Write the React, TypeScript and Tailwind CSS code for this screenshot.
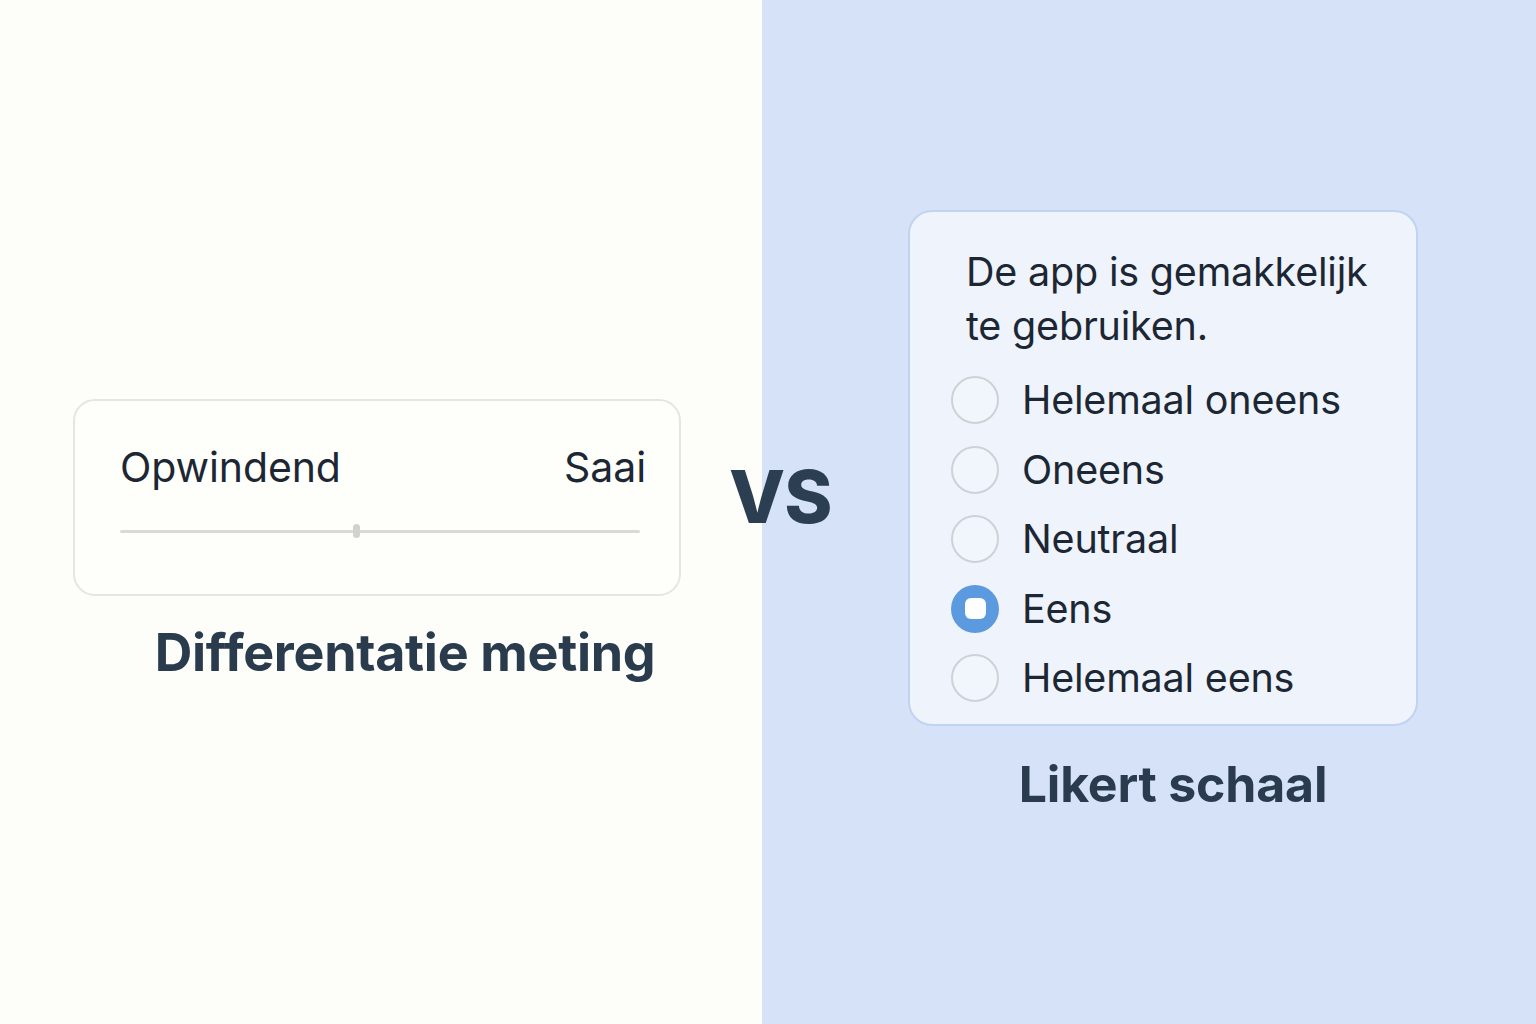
import React from "react";

const options = [
  { label: "Helemaal oneens", checked: false },
  { label: "Oneens", checked: false },
  { label: "Neutraal", checked: false },
  { label: "Eens", checked: true },
  { label: "Helemaal eens", checked: false },
];

export default function App() {
  return (
    <div
      className="relative flex w-[1536px] h-[1024px] overflow-hidden"
      style={{ fontFamily: "Inter, 'Noto Sans', sans-serif" }}
    >
      {/* Left half */}
      <div className="w-[762px] h-full bg-[#fdfdf9] flex flex-col pt-[399px] pl-[73px]">
        <div className="w-[608px] h-[197px] rounded-[22px] border-2 border-[#e6e5e1] bg-[#fefefb] px-[45px] pt-[41px]">
          <div className="flex justify-between items-baseline text-[41px] leading-[50px] text-[#1c2733] tracking-[-0.1px]">
            <span>Opwindend</span>
            <span className="mr-[-12px]">Saai</span>
          </div>
          <div className="relative mt-[38px] w-[520px] h-[3px] bg-[#dcdad6] rounded-full">
            <div className="absolute left-[233px] top-[-6px] w-[7px] h-[14px] rounded-full bg-[#d3d1cc]" />
          </div>
        </div>
        <div className="mt-[24px] w-[664px] text-center text-[52px] leading-[66px] font-bold text-[#2a3b4e] tracking-[-0.3px]">
          Differentatie meting
        </div>
      </div>

      {/* Right half */}
      <div className="flex-1 h-full bg-[#d6e2f7] flex flex-col pt-[210px] pl-[146px]">
        <div className="w-[510px] h-[516px] rounded-[24px] border-2 border-[#c0d3f0] bg-[#eef3fc] pl-[41px] pt-[33px]">
          <div className="pl-[15px] text-[39.5px] leading-[54px] text-[#1c2733] tracking-[-0.2px]">
            De app is gemakkelijk
            <br />
            te gebruiken.
          </div>
          <div className="mt-[23px] flex flex-col gap-[21.5px]">
            {options.map((o) => (
              <div key={o.label} className="flex items-center h-[48px]">
                {o.checked ? (
                  <div className="w-[48px] h-[48px] rounded-full bg-[#5c9ae0] flex items-center justify-center">
                    <div className="w-[21px] h-[21px] rounded-[6px] bg-white" />
                  </div>
                ) : (
                  <div className="w-[48px] h-[48px] rounded-full border-2 border-[#cdd2d9] bg-[#f1f5fc]" />
                )}
                <span className="ml-[23px] text-[39.5px] leading-[48px] text-[#1c2733] tracking-[-0.2px]">
                  {o.label}
                </span>
              </div>
            ))}
          </div>
        </div>
        <div className="mt-[26px] w-[530px] text-center text-[50px] leading-[64px] font-bold text-[#2a3b4e] tracking-[-0.2px]">
          Likert schaal
        </div>
      </div>

      {/* VS overlay across the split */}
      <div className="absolute left-[729px] top-[455px] text-[73px] leading-[84px] font-extrabold text-[#2c3e52] tracking-[-1px]">
        VS
      </div>
    </div>
  );
}
